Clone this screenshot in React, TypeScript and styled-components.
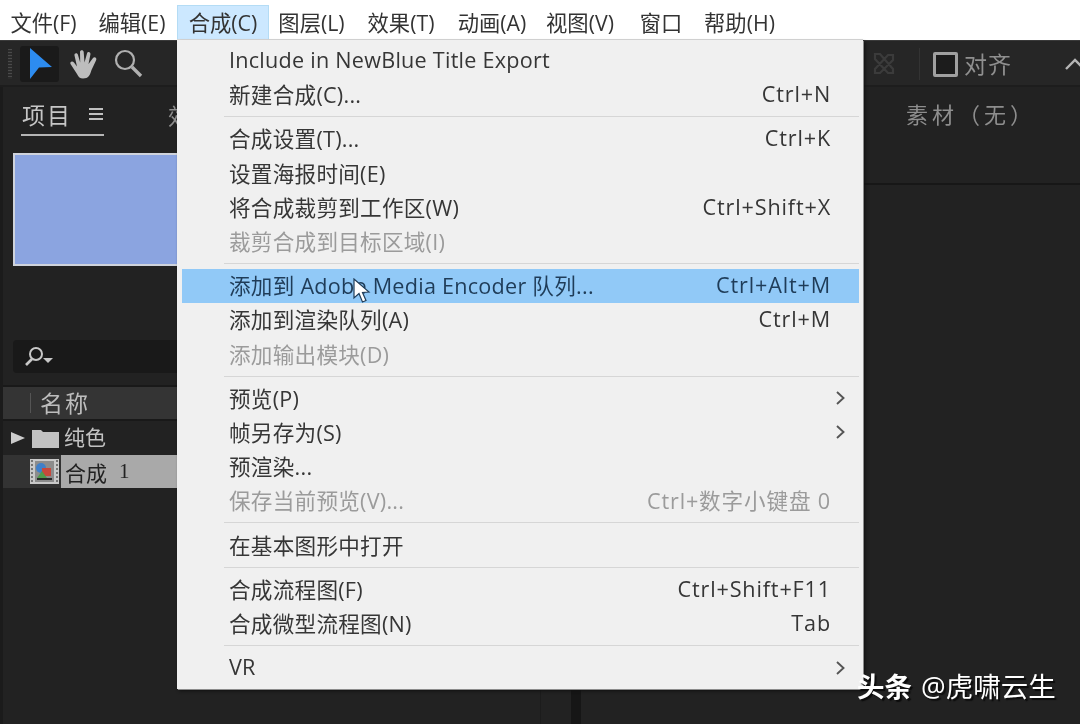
import React from "react";
import styled, { createGlobalStyle } from "styled-components";

const Global = createGlobalStyle`
  html, body { margin: 0; padding: 0; background: #222; }
  #root { width: 1080px; height: 724px; overflow: hidden; }
`;

const FONT = `"Open Sans", "Noto Sans CJK SC", sans-serif`;

const Page = styled.div`
  position: relative;
  width: 1080px;
  height: 724px;
  display: flex;
  flex-direction: column;
  overflow: hidden;
  font-family: ${FONT};
  filter: blur(0.55px);
`;

const MenuBar = styled.div`
  height: 40px;
  flex: none;
  display: flex;
  align-items: stretch;
  background: #fff;
  box-sizing: border-box;
  padding-top: 5px;
`;

const BarItem = styled.div<{ $w: number; $active?: boolean }>`
  width: ${(p) => p.$w}px;
  box-sizing: border-box;
  display: flex;
  align-items: center;
  justify-content: center;
  font-size: 21.3px;
  white-space: nowrap;
  color: #333;
  padding-bottom: 3px;
  background: ${(p) => (p.$active ? "#cce8ff" : "transparent")};
  outline: ${(p) => (p.$active ? "1px solid #b4dcf5" : "none")};
  outline-offset: -1px;
`;

const Workspace = styled.div`
  flex: 1;
  display: flex;
  flex-direction: column;
  background: #222;
  border-top: 1px solid #3a3a3a;
  min-height: 0;
`;

const Toolbar = styled.div`
  height: 46px;
  flex: none;
  display: flex;
  align-items: center;
  padding: 0 0 0 8px;
  background: #262626;
  box-shadow: inset 0 -2px 0 #1d1d1d;
`;

const Grip = styled.div`
  width: 4px;
  height: 30px;
  margin-right: 8px;
  background: repeating-linear-gradient(#4a4a4a 0 1px, #2b2b2b 1px 3px);
`;

const ToolButton = styled.div<{ $w: number; $selected?: boolean }>`
  width: ${(p) => p.$w}px;
  height: 36px;
  display: flex;
  align-items: center;
  justify-content: center;
  flex: none;
  border-radius: 3px;
  background: ${(p) => (p.$selected ? "#1a1a1a" : "transparent")};
`;

const ToolbarRight = styled.div`
  margin-left: auto;
  margin-right: -5px;
  display: flex;
  align-items: center;
  height: 100%;
`;

const Divider = styled.div`
  width: 1px;
  height: 32px;
  background: #333;
  margin: 0 13px 0 23px;
`;

const Checkbox = styled.div`
  width: 25px;
  height: 25px;
  box-sizing: border-box;
  border: 3px solid #a0a0a0;
  border-radius: 2px;
  background: #1c1c1c;
  margin-right: 6px;
`;

const AlignLabel = styled.span`
  font-size: 23px;
  color: #8f8f8f;
  letter-spacing: 1px;
  margin-right: 53px;
  margin-bottom: 2px;
`;

const Panels = styled.div`
  flex: 1;
  display: flex;
  min-height: 0;
`;

const ProjectPanel = styled.div`
  width: 540px;
  flex: none;
  display: flex;
  flex-direction: column;
  box-sizing: border-box;
  padding-left: 3px;
  box-shadow: inset 3px 0 0 #1b1b1b;
`;

const MiddleGap = styled.div`
  width: 30px;
  flex: none;
  border-left: 1px solid #1c1c1c;
`;

const PanelDivider = styled.div`
  width: 10px;
  flex: none;
  background: #161616;
`;

const TabRow = styled.div`
  height: 49px;
  flex: none;
  display: flex;
  align-items: flex-end;
  padding-left: 18px;
  box-sizing: border-box;
`;

const Tab = styled.div`
  width: 83px;
  height: 45px;
  box-sizing: border-box;
  border-bottom: 2px solid #b5b5b5;
  display: flex;
  align-items: center;
  gap: 17px;
  padding-left: 1px;
  padding-top: 2px;
  font-size: 23px;
  letter-spacing: 2px;
  color: #c6c6c6;
`;

const OtherTab = styled.div`
  height: 45px;
  margin-left: 64px;
  box-sizing: border-box;
  padding-top: 2px;
  display: flex;
  align-items: center;
  font-size: 23px;
  letter-spacing: 2px;
  color: #8e8e8e;
`;

const Thumb = styled.div`
  margin: 17px 0 0 10px;
  height: 113px;
  flex: none;
  box-sizing: border-box;
  background: #8ba4e0;
  border: 2px solid #cfd3dc;
  border-right: none;
`;

const SearchBox = styled.div`
  margin: 74px 0 0 10px;
  height: 33px;
  flex: none;
  display: flex;
  align-items: center;
  padding-left: 11px;
  background: #191919;
  border-radius: 4px;
`;

const HeaderRow = styled.div`
  margin-top: 14px;
  height: 32px;
  flex: none;
  display: flex;
  align-items: center;
  box-sizing: border-box;
  padding-bottom: 3px;
  background: #343434;
  box-shadow: 0 -2px 0 #191919, 0 2px 0 #191919;
  font-size: 23px;
  letter-spacing: 2px;
  color: #bdbdbd;
`;

const HeaderSep = styled.div`
  width: 1px;
  height: 20px;
  background: #555;
  margin: 3px 9px 0 27px;
`;

const FileRow = styled.div<{ $selected?: boolean }>`
  height: 33px;
  margin-top: ${(p) => (p.$selected ? 1 : 2)}px;
  flex: none;
  display: flex;
  align-items: center;
  background: ${(p) => (p.$selected ? "#333" : "transparent")};
  color: #c2c2c2;
  font-size: 20px;
`;

const Triangle = styled.div`
  width: 0;
  height: 0;
  margin-left: 8px;
  margin-right: 7px;
  border-left: 14px solid #ccc;
  border-top: 6px solid transparent;
  border-bottom: 6px solid transparent;
`;

const FolderName = styled.span`
  margin-left: 5px;
  margin-bottom: 4px;
  font-size: 21px;
`;

const SelectedName = styled.div`
  flex: 1;
  align-self: stretch;
  margin-left: 2px;
  padding-left: 4px;
  display: flex;
  align-items: center;
  gap: 12px;
  background: #a9a9a9;
  color: #222;
  font-size: 21px;
`;

const Digit = styled.span`
  font-family: "Liberation Serif", serif;
  font-size: 21px;
`;

const SourcePanel = styled.div`
  flex: 1;
  display: flex;
  flex-direction: column;
`;

const SourceHeader = styled.div`
  height: 98px;
  flex: none;
  box-sizing: border-box;
  padding: 10px 0 0 325px;
  border-bottom: 2px solid #171717;
  font-size: 22px;
  letter-spacing: 4px;
  color: #8e8e8e;
`;

const Dropdown = styled.div`
  position: absolute;
  left: 177px;
  top: 40px;
  width: 686px;
  height: 649px;
  box-sizing: border-box;
  padding: 3.5px 4px 0 5px;
  background: #f0f0f0;
  box-shadow: 1px 1px 0 #8c8c8c, 2px 2px 3px #111, 0 -1px 0 #dcdcdc;
  display: flex;
  flex-direction: column;
`;

const Row = styled.div<{ $hot?: boolean; $off?: boolean }>`
  height: 34.2px;
  flex: none;
  position: relative;
  display: flex;
  align-items: center;
  justify-content: space-between;
  box-sizing: border-box;
  padding: 0 28px 2px 47px;
  font-size: 21.6px;
  letter-spacing: 0.25px;
  white-space: nowrap;
  color: ${(p) => (p.$off ? "#9b9b9b" : p.$hot ? "#1f3c58" : "#363636")};
  background: ${(p) => (p.$hot ? "#91c9f7" : "transparent")};
`;

const Shortcut = styled.span`
  letter-spacing: 0.85px;
`;

const Sep = styled.div`
  height: 1px;
  flex: none;
  margin: 4.5px 0 4.5px 42px;
  background: #d6d6d6;
`;

const Arrow = styled.svg`
  position: absolute;
  right: 14px;
  top: 10px;
`;

const Pointer = styled.svg`
  position: absolute;
  left: 353px;
  top: 278px;
`;

const Watermark = styled.div`
  position: absolute;
  left: 857px;
  top: 669px;
  font-size: 27.5px;
  line-height: 36px;
  color: #fff;
  white-space: nowrap;
  text-shadow: 2px 2px 1px #0c0c0c;
`;

const Strong = styled.b`
  font-weight: 700;
  margin-right: 9px;
`;

type Item = { l: string; s?: string; off?: boolean; hot?: boolean; sub?: boolean } | "sep";

const items: Item[] = [
  { l: "Include in NewBlue Title Export" },
  { l: "新建合成(C)...", s: "Ctrl+N" },
  "sep",
  { l: "合成设置(T)...", s: "Ctrl+K" },
  { l: "设置海报时间(E)" },
  { l: "将合成裁剪到工作区(W)", s: "Ctrl+Shift+X" },
  { l: "裁剪合成到目标区域(I)", off: true },
  "sep",
  { l: "添加到 Adobe Media Encoder 队列...", s: "Ctrl+Alt+M", hot: true },
  { l: "添加到渲染队列(A)", s: "Ctrl+M" },
  { l: "添加输出模块(D)", off: true },
  "sep",
  { l: "预览(P)", sub: true },
  { l: "帧另存为(S)", sub: true },
  { l: "预渲染..." },
  { l: "保存当前预览(V)...", s: "Ctrl+数字小键盘 0", off: true },
  "sep",
  { l: "在基本图形中打开" },
  "sep",
  { l: "合成流程图(F)", s: "Ctrl+Shift+F11" },
  { l: "合成微型流程图(N)", s: "Tab" },
  "sep",
  { l: "VR", sub: true },
];

const bar: [string, number, boolean?][] = [
  ["文件(F)", 87],
  ["编辑(E)", 90],
  ["合成(C)", 92, true],
  ["图层(L)", 85],
  ["效果(T)", 94],
  ["动画(A)", 88],
  ["视图(V)", 88],
  ["窗口", 74],
  ["帮助(H)", 83],
];

export default function App() {
  return (
    <Page>
      <Global />
      <MenuBar>
        {bar.map(([t, w, a]) => (
          <BarItem key={t} $w={w} $active={a}>{t}</BarItem>
        ))}
      </MenuBar>
      <Workspace>
        <Toolbar>
          <Grip />
          <ToolButton $w={39} $selected>
            <svg width="30" height="34" viewBox="0 0 30 34">
              <path d="M5 1 L27 20 L14 20.5 L5 32 Z" fill="#2d8cf0" />
            </svg>
          </ToolButton>
          <ToolButton $w={50}>
            <svg width="30" height="31" viewBox="0 0 30 31">
              <path d="M8 25 L1.5 15 C0.5 12.5 3.5 11.5 5 13.5 L8 17.5 L5.5 6.5 C5 4 8.5 3.5 9 6 L11.2 13.5 L11 3 C11 0.5 14.5 0.5 14.7 3 L15.5 13.5 L18 4.5 C18.7 2 22 3 21.4 5.5 L19.5 15 L24 9 C25.5 7 28.5 9 27 11.5 L22.5 21 C21 26 19.5 29.5 14 29.5 C11 29.5 9.5 28 8 25 Z" fill="#bdbdbd" />
            </svg>
          </ToolButton>
          <ToolButton $w={38}>
            <svg width="30" height="30" viewBox="0 0 30 30" fill="none" stroke="#b0b0b0">
              <circle cx="12" cy="11" r="9" strokeWidth="2.2" />
              <path d="M19 18 L28 27" strokeWidth="3.4" />
            </svg>
          </ToolButton>
          <ToolbarRight>
            <svg width="24" height="24" viewBox="0 0 24 24" fill="none" stroke="#3b3b3b" strokeWidth="2.2">
              <path d="M3 2 H8 L21 17 V21 H16 L3 7 Z M21 3 V8 L8 21 H3 V17 L16 3 Z" />
            </svg>
            <Divider />
            <Checkbox />
            <AlignLabel>对齐</AlignLabel>
            <svg width="20" height="14" viewBox="0 0 20 14" fill="none" stroke="#b5b5b5" strokeWidth="2.4">
              <path d="M1 12 L10 3 L19 12" />
            </svg>
          </ToolbarRight>
        </Toolbar>
        <Panels>
          <ProjectPanel>
            <TabRow>
              <Tab>
                项目
                <svg width="14" height="14" viewBox="0 0 14 14" stroke="#c0c0c0" strokeWidth="2">
                  <path d="M0 2 H14 M0 7 H14 M0 12 H14" />
                </svg>
              </Tab>
              <OtherTab>效</OtherTab>
            </TabRow>
            <Thumb />
            <SearchBox>
              <svg width="30" height="22" viewBox="0 0 30 22" fill="none" stroke="#c8c8c8">
                <circle cx="12" cy="8" r="6" strokeWidth="2" />
                <path d="M8 13 L2 19" strokeWidth="2.6" />
                <path d="M19 12 H29 L24 17 Z" fill="#c8c8c8" stroke="none" />
              </svg>
            </SearchBox>
            <HeaderRow>
              <HeaderSep />
              名称
            </HeaderRow>
            <FileRow>
              <Triangle />
              <svg width="27" height="20" viewBox="0 0 27 20">
                <path d="M0 2 H9 L11 4 H27 V20 H0 Z" fill="#c2c2c2" />
              </svg>
              <FolderName>纯色</FolderName>
            </FileRow>
            <FileRow $selected>
              <svg width="29" height="25" viewBox="0 0 29 25" style={{ marginLeft: 27 }}>
                <rect width="29" height="25" fill="#c9c9c9" />
                <path d="M2 1 V24 M27 1 V24" stroke="#5a5a5a" strokeWidth="1.5" strokeDasharray="2 2" />
                <rect x="5" y="2" width="19" height="21" fill="#8c8c8c" />
                <circle cx="11" cy="9" r="5" fill="#3f7fc9" />
                <rect x="12" y="9" width="9" height="8" fill="#c8483c" />
                <path d="M7 19 L12 12 L17 19 Z" fill="#4f9a4c" />
                <rect x="7" y="19" width="15" height="2" fill="#2a2a2a" />
              </svg>
              <SelectedName>
                合成 <Digit>1</Digit>
              </SelectedName>
            </FileRow>
          </ProjectPanel>
          <MiddleGap />
          <PanelDivider />
          <SourcePanel>
            <SourceHeader>素材（无）</SourceHeader>
          </SourcePanel>
        </Panels>
      </Workspace>
      <Dropdown>
        {items.map((it, i) =>
          it === "sep" ? (
            <Sep key={i} />
          ) : (
            <Row key={i} $hot={it.hot} $off={it.off}>
              <span>{it.l}</span>
              {it.s && <Shortcut>{it.s}</Shortcut>}
              {it.sub && (
                <Arrow width="9" height="14" viewBox="0 0 9 14" fill="none" stroke="#555" strokeWidth="1.9">
                  <path d="M1 1 L7.5 7 L1 13" />
                </Arrow>
              )}
            </Row>
          )
        )}
      </Dropdown>
      <Pointer width="18" height="26" viewBox="0 0 18 26">
        <path d="M1 1 L1 20 L6 15.5 L9.5 24 L13 22.5 L9.5 14.5 L16 14 Z" fill="#fff" stroke="#1f3c58" strokeWidth="1.2" />
      </Pointer>
      <Watermark>
        <Strong>头条</Strong>@虎啸云生
      </Watermark>
    </Page>
  );
}
